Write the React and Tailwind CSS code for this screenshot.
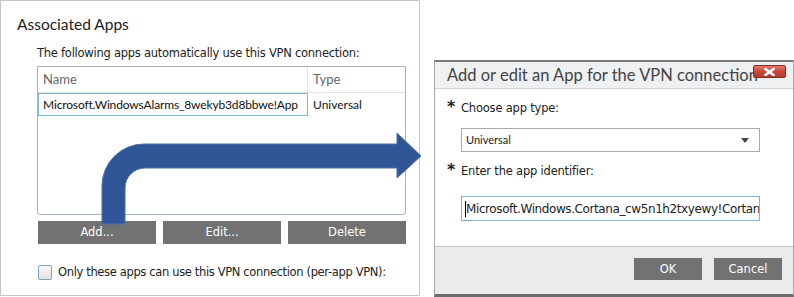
import React from "react";

const tah = { fontFamily: '"DejaVu Sans", Verdana, sans-serif' };

export default function App() {
  return (
    <div className="relative w-[794px] h-[297px] bg-white overflow-hidden flex items-start">
      {/* Left panel */}
      <div className="w-[420px] h-[296px] border border-[#c6c6c6] shrink-0 font-['Lato',sans-serif]">
        <div className="pl-[16px] pt-[12px] h-[34px] text-[15.5px] leading-[22px] text-[#222]">Associated Apps</div>
        <div className="pl-[36px]">
          <div className="h-[14px] mt-[11px] text-[11.5px] leading-[14px] text-[#222] tracking-[-0.25px] whitespace-nowrap" style={tah}>
            The following apps automatically use this VPN connection:
          </div>
          <div className="mt-[6px] w-[369px] h-[149px] border border-[#a9b4c1] rounded-b-[3px] flex flex-col">
            <div className="h-[26px] flex border-b border-[#e2e2e2] text-[13px] text-[#666] leading-[25px]">
              <div className="w-[270px] border-r border-[#e2e2e2] pl-[5px]">Name</div>
              <div className="pl-[5px]">Type</div>
            </div>
            <div className="h-[23px] flex text-[12px] text-[#111] leading-[21px]">
              <div className="w-[270px] border border-[#7dbad2] pl-[4px] whitespace-nowrap overflow-hidden tracking-[-0.15px]">
                Microsoft.WindowsAlarms_8wekyb3d8bbwe!App
              </div>
              <div className="pl-[5px] leading-[23px]">Universal</div>
            </div>
          </div>
          <div className="mt-[6px] flex gap-[7px] ml-[1px]">
            {["Add...", "Edit...", "Delete"].map((t) => (
              <div key={t} className="w-[118px] h-[23px] bg-[#727272] text-white text-[11.5px] leading-[23px] text-center" style={tah}>
                {t}
              </div>
            ))}
          </div>
          <div className="mt-[21px] flex items-center ml-[1px]">
            <div className="w-[14px] h-[15px] rounded-[2px] border border-[#7ea4bd] bg-gradient-to-b from-[#f7f7f7] to-[#e4e4e4]" />
            <div className="ml-[6px] text-[11.5px] leading-[15px] text-[#222] tracking-[-0.35px] whitespace-nowrap" style={tah}>
              Only these apps can use this VPN connection (per-app VPN):
            </div>
          </div>
        </div>
      </div>

      {/* Dialog */}
      <div className="relative ml-[14px] mt-[60px] w-[360px] h-[237px] border-t-2 border-t-[#7a7a7a] border-x border-x-[#a8a8a8] border-b-[3px] border-b-[#6e6e6e] flex flex-col bg-white">
        <div className="h-[27px] bg-[#eef0f2] border-b border-[#cfd2d6] pl-[12px] text-[16.5px] leading-[26px] text-[#444] whitespace-nowrap overflow-hidden font-['Lato',sans-serif]">
          Add or edit an App for the VPN connection
        </div>
        <div className="absolute top-[3px] right-[7px] w-[33px] h-[13px] rounded-[2px] border border-[#8f2a22] bg-gradient-to-b from-[#e07a6c] via-[#c9473a] to-[#b33a2e] flex items-center justify-center">
          <svg width="11" height="8" viewBox="0 0 11 8">
            <path d="M1.5 1 L9.5 7 M9.5 1 L1.5 7" stroke="white" strokeWidth="2.6" strokeLinecap="square" />
          </svg>
        </div>
        <div className="flex-1 pl-[12px] pr-[32px]">
          <div className="mt-[11px] h-[16px] flex items-center text-[11.5px] text-[#222] leading-[16px]" style={tah}>
            <span className="w-[14px] text-[16px] font-bold leading-[16px] -mt-[2px]">*</span>
            <span className="tracking-[-0.2px]">Choose app type:</span>
          </div>
          <div className="mt-[12px] ml-[14px] w-[299px] h-[24px] border border-[#aaaaaa] flex items-center justify-between pl-[4px] pr-[10px]">
            <span className="text-[11px] text-[#222] font-['Lato',sans-serif]">Universal</span>
            <svg width="8" height="5" viewBox="0 0 8 5"><path d="M0 0 H8 L4 5 Z" fill="#444" /></svg>
          </div>
          <div className="mt-[11px] h-[16px] flex items-center text-[11.5px] text-[#222] leading-[16px]" style={tah}>
            <span className="w-[14px] text-[16px] font-bold leading-[16px] -mt-[2px]">*</span>
            <span className="tracking-[-0.2px]">Enter the app identifier:</span>
          </div>
          <div className="mt-[17px] ml-[14px] w-[299px] h-[25px] border border-[#7fb3d6] flex items-center pl-[3px] overflow-hidden whitespace-nowrap">
            <span className="w-px h-[16px] bg-black shrink-0" />
            <span className="text-[12px] text-[#222] tracking-[-0.4px]" style={tah}>
              Microsoft.Windows.Cortana_cw5n1h2txyewy!Cortana
            </span>
          </div>
        </div>
        <div className="h-[48px] bg-[#ebebee] border-t border-[#c4c4c4] flex justify-end items-start pt-[11px] pr-[11px] gap-[12px]">
          {["OK", "Cancel"].map((t) => (
            <div key={t} className="w-[68px] h-[22px] bg-[#727272] text-white text-[11.5px] leading-[22px] text-center" style={tah}>
              {t}
            </div>
          ))}
        </div>
      </div>

      {/* Arrow overlay */}
      <svg className="absolute left-0 top-0 pointer-events-none" width="794" height="297" viewBox="0 0 794 297">
        <path
          d="M102 224 L102 186 A42 42 0 0 1 144 144 L397 144 L397 133 L421 156 L397 178 L397 168 L145 168 A20 20 0 0 0 125 188 L125 224 Z"
          fill="#2f5597"
          stroke="#4d6ea6"
          strokeWidth="1"
        />
      </svg>
    </div>
  );
}
